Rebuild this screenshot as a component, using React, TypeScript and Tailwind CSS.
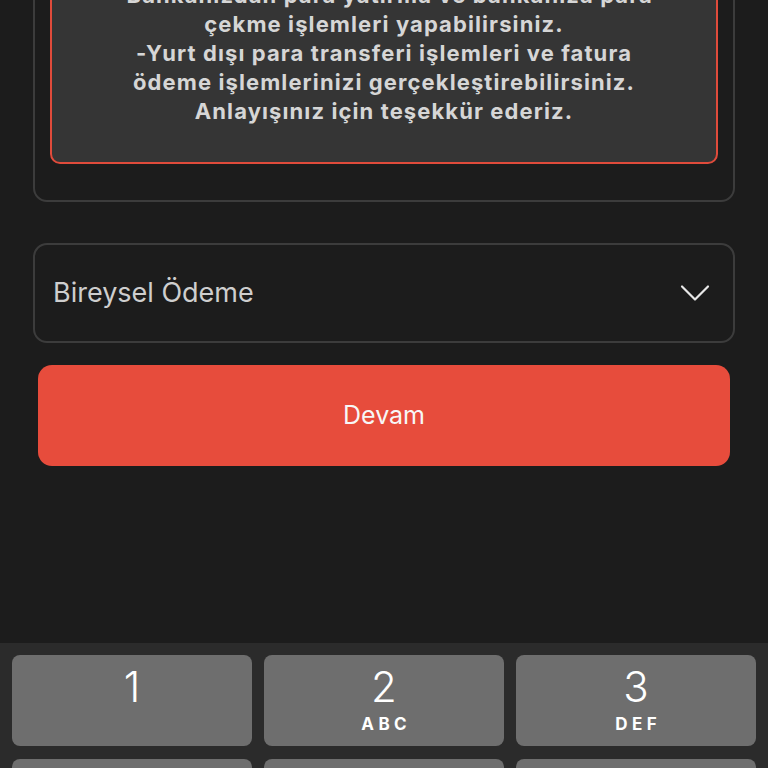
import { ChevronDown } from "lucide-react";

const lines = [
  "-Bankanızdan para yatırma ve bankanıza para",
  "çekme işlemleri yapabilirsiniz.",
  "-Yurt dışı para transferi işlemleri ve fatura",
  "ödeme işlemlerinizi gerçekleştirebilirsiniz.",
  "Anlayışınız için teşekkür ederiz.",
];

const keys = [
  { n: "1", l: "" },
  { n: "2", l: "ABC" },
  { n: "3", l: "DEF" },
  { n: "4", l: "GHI" },
  { n: "5", l: "JKL" },
  { n: "6", l: "MNO" },
];

const Key = ({ n, l }: { n: string; l: string }) => (
  <div className="h-[91px] rounded-[8px] bg-[#6e6e6e] flex flex-col items-center pt-[8px]">
    <span className="text-[42px] leading-[48px] font-light text-white">{n}</span>
    {l && (
      <span className="mt-[4px] text-[17px] leading-[18px] font-bold tracking-[0.26em] pl-[0.26em] text-white">
        {l}
      </span>
    )}
  </div>
);

const App = () => {
  return (
    <div
      className="w-[768px] h-[768px] overflow-hidden bg-[#1c1c1c] flex flex-col"
      style={{ fontFamily: "Inter, 'Noto Sans', sans-serif" }}
    >
      <div className="mx-[33px] -mt-[54px] rounded-[14px] border-2 border-[#3c3c3c] px-[15px] pt-[15px] pb-[36px]">
        <div className="rounded-[10px] border-2 border-[#e04b3b] bg-[#353535] pt-[16px] pb-[36px] text-center">
          {lines.map((t) => (
            <p
              key={t}
              className="text-[22px] leading-[29px] font-bold tracking-[0.05em] text-[#d6d6d6]"
            >
              {t}
            </p>
          ))}
        </div>
      </div>

      <div className="mx-[33px] mt-[41px] h-[100px] rounded-[14px] border-2 border-[#3c3c3c] flex items-center justify-between pl-[18px] pr-[12px]">
        <span className="text-[27px] text-[#cecece]">Bireysel Ödeme</span>
        <ChevronDown className="w-[52px] h-[52px] text-[#e8e8e8]" strokeWidth={1} />
      </div>

      <button className="mx-[38px] mt-[22px] h-[101px] rounded-[14px] bg-[#e74c3c] text-[25px] text-[#f7f7f7]">
        Devam
      </button>

      <div className="flex-1" />

      <div className="h-[125px] bg-[#2b2b2b] px-[12px] pt-[12px] grid grid-cols-3 gap-x-[12px] gap-y-[13px] overflow-hidden">
        {keys.map((k) => (
          <Key key={k.n} n={k.n} l={k.l} />
        ))}
      </div>
    </div>
  );
};

export default App;
